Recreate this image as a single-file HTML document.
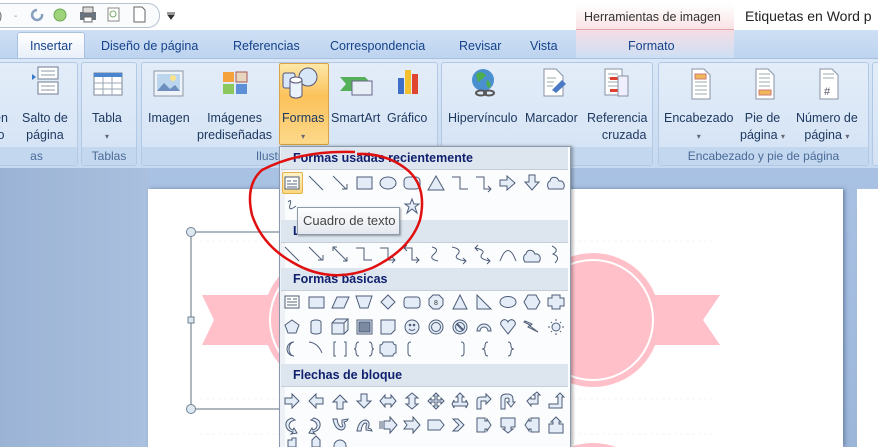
<!DOCTYPE html>
<html><head><meta charset="utf-8"><style>
*{margin:0;padding:0;box-sizing:border-box}
html,body{width:878px;height:447px;overflow:hidden}
body{position:relative;background:#fff;font-family:"Liberation Sans",sans-serif;font-size:12px;color:#1e3960}
.a{position:absolute;white-space:nowrap}
.tab{position:absolute;top:39px;font-size:12.5px;color:#15428b}
.grp{position:absolute;top:62px;height:104px;background:linear-gradient(#e3edf9,#d3e2f4);border:1px solid #b2c9e6;border-radius:3px}
.gl{position:absolute;bottom:0;left:0;right:0;height:18px;background:#c3d7ef;color:#4a6a98;text-align:center;font-size:12px;line-height:18px}
.lb{position:absolute;font-size:12.5px;color:#1e3960;text-align:center;line-height:17px}
.hd{position:absolute;left:281px;width:287px;background:#dde6ef;border-bottom:1px solid #c5ced8;font-weight:bold;color:#10206e;font-size:12.5px;padding-left:12px}
</style></head><body>
<div class="a" style="left:-20px;top:3px;width:180px;height:25px;border:1px solid #b9c3cf;border-radius:12px;background:#fafbfd"></div>
<svg class="a" style="left:0;top:0" width="180" height="30">
<text x="-2" y="20" font-size="13" fill="#777">)</text>
<text x="14" y="19" font-size="10" fill="#999">-</text>
<path d="M37 10 A5 5 0 1 0 42 14" stroke="#8aa0c0" stroke-width="2.5" fill="none"/>
<circle cx="60" cy="15" r="6" fill="#9ed37a" stroke="#6aa84f"/>
<rect x="80" y="12" width="16" height="8" fill="#6a7480"/><rect x="83" y="7" width="10" height="6" fill="#ddd" stroke="#666"/><rect x="84" y="17" width="8" height="5" fill="#fff" stroke="#666"/>
<rect x="108" y="8" width="11" height="13" fill="#fff" stroke="#888"/><circle cx="113" cy="14" r="3" fill="none" stroke="#7a6"/>
<path d="M134 7 H142 L145 10 V22 H134Z" fill="#fff" stroke="#666"/>
<path d="M167 13 H175 M168 15 L171 19 L174 15Z" stroke="#333" fill="#333"/>
</svg>
<div class="a" style="left:576px;top:4px;width:158px;height:27px;background:linear-gradient(#fff,#f9e3e6);border-bottom:2px solid #e7a4ac"></div>
<div class="a" style="left:584px;top:10px;font-size:12.5px;color:#333">Herramientas de imagen</div>
<div class="a" style="left:745px;top:8px;font-size:14px;color:#222">Etiquetas en Word p</div>
<div class="a" style="left:0;top:30px;width:878px;height:30px;background:linear-gradient(#cfe0f5,#bcd2ee)"></div>
<div class="a" style="left:576px;top:30px;width:158px;height:28px;background:linear-gradient(#f5dde4,#cddff4)"></div>
<div class="a" style="left:17px;top:32px;width:68px;height:28px;background:linear-gradient(#fff,#e6eef9);border:1px solid #a9c1e0;border-bottom:none;border-radius:3px 3px 0 0"></div>
<div class="tab" style="left:30px">Insertar</div>
<div class="tab" style="left:101px">Diseño de página</div>
<div class="tab" style="left:233px">Referencias</div>
<div class="tab" style="left:330px">Correspondencia</div>
<div class="tab" style="left:459px">Revisar</div>
<div class="tab" style="left:530px">Vista</div>
<div class="tab" style="left:628px">Formato</div>
<div class="a" style="left:0;top:58px;width:878px;height:112px;background:linear-gradient(#dae7f6,#c6d9f0);border-top:1px solid #a9c1e0"></div>
<div class="grp" style="left:-5px;width:83px"><div class="gl">as</div></div>
<div class="grp" style="left:81px;width:56px"><div class="gl">Tablas</div></div>
<div class="grp" style="left:141px;width:297px"><div class="gl">Ilustraciones</div></div>
<div class="grp" style="left:441px;width:212px"><div class="gl">Vínculos</div></div>
<div class="grp" style="left:658px;width:211px"><div class="gl">Encabezado y pie de página</div></div>
<div class="grp" style="left:872px;width:20px"></div>
<div class="a" style="left:279px;top:63px;width:50px;height:82px;background:linear-gradient(#fde8a8,#fbc25a 40%,#fdd98a);border:1px solid #d9a441;border-radius:2px"></div>
<svg class="a" style="left:0;top:60px" width="878" height="50">
<path d="M32 14 L36 17 L32 20Z" fill="#3a79c8"/><rect x="38" y="7" width="20" height="12" fill="#fff" stroke="#6d7c92"/><rect x="38" y="22" width="20" height="12" fill="#fff" stroke="#6d7c92"/>
<path d="M41 11H55M41 15H55M41 26H55M41 30H55" stroke="#8b99ad"/>
<rect x="94" y="13" width="28" height="22" fill="#fff" stroke="#7b8799"/><rect x="94" y="13" width="28" height="4" fill="#4b84cf"/><path d="M94 23H122M94 29H122M103 17V35M112 17V35" stroke="#9aa6b6"/>
<rect x="154" y="11" width="29" height="25" fill="#eef3fa" stroke="#8d97a6"/><rect x="157" y="14" width="23" height="17" fill="#bcd6ee"/><circle cx="173" cy="18" r="3" fill="#fde38a"/><path d="M157 31 L164 23 L170 29 L175 25 L180 31Z" fill="#6e8ec0"/>
<rect x="223" y="12" width="11" height="10" fill="#f4a33c"/><rect x="236" y="12" width="11" height="10" fill="#e8d7c0" stroke="#a55"/><rect x="223" y="24" width="11" height="10" fill="#8cc75d"/><rect x="236" y="24" width="11" height="10" fill="#5c8fd6"/>
<rect x="283" y="13" width="12" height="15" rx="2" fill="#d6e7fb" stroke="#557"/><circle cx="308" cy="17" r="9" fill="#d8e7f8" stroke="#557"/><path d="M290 20 V35 A6 3 0 0 0 302 35 V20Z" fill="#eaf2fc" stroke="#557"/><ellipse cx="296" cy="20" rx="6" ry="3" fill="#fff" stroke="#557"/>
<path d="M340 17 H365 L372 24 L365 31 H340 L346 24Z" fill="#55b05a"/><rect x="352" y="21" width="20" height="14" fill="#e8eef6" stroke="#668"/>
<rect x="398" y="18" width="6" height="16" fill="#3d6fc8"/><rect x="405" y="10" width="6" height="24" fill="#f3c12e"/><rect x="412" y="14" width="6" height="20" fill="#e0452f"/>
<circle cx="483" cy="20" r="11" fill="#4a90d0"/><path d="M476 14 Q481 10 486 15 Q482 20 478 22Z M487 20 Q492 22 490 28 Q485 27 487 20Z" fill="#4cae4c"/><ellipse cx="481" cy="33" rx="5" ry="2.5" fill="none" stroke="#555" stroke-width="2"/><ellipse cx="489" cy="33" rx="5" ry="2.5" fill="none" stroke="#555" stroke-width="2"/>
<path d="M544 9 H556 L563 16 V36 H544Z" fill="#fff" stroke="#8893a3"/><path d="M547 18H556M547 22H554M547 26H553" stroke="#9aa"/><path d="M552 30 L562 20 L566 24 L556 33Z" fill="#4c79c4"/>
<rect x="605" y="9" width="17" height="26" fill="#fff" stroke="#8893a3"/><path d="M608 14H618M608 18H614M608 22H618M608 26H618" stroke="#9aa"/><rect x="610" y="17" width="8" height="3" fill="#e04030"/><rect x="610" y="29" width="8" height="3" fill="#e04030"/><rect x="618" y="16" width="10" height="20" fill="#eef" stroke="#8893a3"/>
<path d="M692 9 H704 L710 15 V39 H692Z" fill="#fff" stroke="#8893a3"/><rect x="695" y="14" width="11" height="5" fill="#f2b857" stroke="#c77"/><path d="M695 22H707M695 26H707M695 30H707M695 34H707" stroke="#9aa"/>
<path d="M756 9 H768 L774 15 V39 H756Z" fill="#fff" stroke="#8893a3"/><path d="M759 14H770M759 18H770M759 22H770M759 26H770" stroke="#9aa"/><rect x="759" y="30" width="12" height="5" fill="#f2b857" stroke="#c77"/>
<path d="M820 9 H832 L838 15 V39 H820Z" fill="#fff" stroke="#8893a3"/><path d="M823 14H834M823 18H834" stroke="#9aa"/><text x="824" y="35" font-size="11" fill="#556">#</text>
</svg>
<div class="lb" style="left:-6px;top:110px">en<br>o</div>
<div class="lb" style="left:22px;top:110px">Salto de<br>página</div>
<div class="lb" style="left:92px;top:110px">Tabla<br><span style="font-size:8px;color:#667">▾</span></div>
<div class="lb" style="left:148px;top:110px">Imagen</div>
<div class="lb" style="left:197px;top:110px">Imágenes<br>prediseñadas</div>
<div class="lb" style="left:282px;top:110px">Formas<br><span style="font-size:8px;color:#667">▾</span></div>
<div class="lb" style="left:331px;top:110px">SmartArt</div>
<div class="lb" style="left:387px;top:110px">Gráfico</div>
<div class="lb" style="left:448px;top:110px">Hipervínculo</div>
<div class="lb" style="left:525px;top:110px">Marcador</div>
<div class="lb" style="left:587px;top:110px">Referencia<br>&nbsp;&nbsp;&nbsp;&nbsp;cruzada</div>
<div class="lb" style="left:664px;top:110px">Encabezado<br><span style="font-size:8px;color:#667">▾</span></div>
<div class="lb" style="left:740px;top:110px">Pie de<br>página <span style="font-size:8px;color:#667">▾</span></div>
<div class="lb" style="left:796px;top:110px">Número de<br>página <span style="font-size:8px;color:#667">▾</span></div>
<div class="a" style="left:0;top:168px;width:878px;height:279px;background:linear-gradient(#a9c2e4,#9cb6da)"></div>
<div class="a" style="left:0;top:168px;width:148px;height:279px;background:linear-gradient(90deg,#9bb3d5,#aac0de)"></div>
<div class="a" style="left:148px;top:189px;width:695px;height:258px;background:#fff;box-shadow:2px 0 4px #6d84a8"></div>
<div class="a" style="left:857px;top:189px;width:21px;height:258px;background:#fff"></div>
<svg class="a" style="left:0;top:0" width="878" height="447">
<path d="M202 295 H720 L703 320 L720 345 H202 L214 320Z" fill="#ffc0c9"/>
<circle cx="330" cy="320" r="67" fill="#ffc0c9"/><circle cx="330" cy="320" r="60" fill="none" stroke="#fff" stroke-width="2"/>
<circle cx="593" cy="320" r="67" fill="#ffc0c9"/><circle cx="593" cy="320" r="60" fill="none" stroke="#fff" stroke-width="2"/>
<circle cx="593" cy="510" r="67" fill="#ffc0c9"/>
<path d="M200 241 H715 M200 399 H715 M200 434 H715" stroke="#f6f6f8" stroke-dasharray="3 3"/>
<rect x="191" y="232" width="100" height="177" fill="none" stroke="#5c6d7e"/>
<circle cx="191" cy="232" r="4.5" fill="#dde8f0" stroke="#6f8296"/><circle cx="191" cy="409" r="4.5" fill="#dde8f0" stroke="#6f8296"/><rect x="188" y="317" width="6" height="6" fill="#dde8f0" stroke="#6f8296"/>
</svg>
<div class="a" style="left:279px;top:146px;width:292px;height:301px;background:#fbfcfd;border:1px solid #8a99ab;border-bottom:none;box-shadow:2px 0 3px rgba(0,0,0,.3)"></div>
<div class="a" style="left:280px;top:147px;width:5px;height:300px;background:#eef1f5"></div>
<div class="hd" style="top:147px;height:23px;line-height:23px">Formas usadas recientemente</div>
<div class="hd" style="top:220px;height:23px;line-height:23px">Líneas</div>
<div class="hd" style="top:268px;height:23px;line-height:23px">Formas básicas</div>
<div class="hd" style="top:364px;height:23px;line-height:23px">Flechas de bloque</div>
<div class="a" style="left:282px;top:172px;width:21px;height:22px;background:linear-gradient(#fff4c9,#fcd77c);border:1px solid #e3b24c;border-radius:2px"></div>
<svg class="a" style="left:0;top:0" width="878" height="447" fill="#e3ecf7" stroke="#4d5d78" stroke-width="1">
<rect x="285" y="177" width="14" height="12" fill="#fff"/><path d="M287 181H291M293 181H297M287 184H297M287 187H297" stroke="#567"/>
<path d="M309 176 L323 190" fill="none"/><path d="M333 176 L346 189 M342 189H347V184" fill="none"/>
<rect x="357" y="177" width="15" height="12"/><ellipse cx="388" cy="183" rx="8" ry="6"/><rect x="404" y="177" width="16" height="12" rx="4"/>
<path d="M436 176 L444 190 H428Z"/><path d="M452 177 H460 V189 H468" fill="none"/><path d="M476 177 H484 V189 H491 M488 186 L491 189 L488 192" fill="none"/>
<path d="M500 180 H507 V176 L515 183 L507 190 V186 H500Z"/><path d="M529 175 H535 V182 H539 L532 190 L525 182 H529Z"/>
<path d="M549 189 H563 C566 185 563 180 559 181 C557 176 551 176 550 181 C547 182 547 187 549 189Z"/>
<path d="M288 202 Q292 198 290 205 Q288 212 296 206" fill="none"/>
<path d="M412 199 L414 204 L419 204 L415 207 L417 213 L412 209 L407 213 L409 207 L405 204 L410 204Z"/>
<g fill="none">
<path d="M285 247 L299 261"/><path d="M309 247 L322 260 M318 260H323V255"/><path d="M333 247 L347 261 M333 251V247H337 M343 261H347V257"/>
<path d="M356 248 H364 V260 H372"/><path d="M380 248 H388 V260 H395 M392 257 L395 260 L392 263"/><path d="M407 245 L404 248 L407 251 M404 248 H412 V260 H419 M416 257 L419 260 L416 263"/>
<path d="M432 247 Q440 249 434 254 Q428 259 438 261"/><path d="M452 247 Q462 249 458 254 Q452 259 466 261 M463 258 L466 261 L463 264"/><path d="M478 245 L475 248 L478 251 M475 248 Q486 250 482 254 Q478 259 490 261 M487 258 L490 261 L487 264"/>
<path d="M500 261 Q508 240 516 261"/>
</g>
<path d="M525 262 H539 C542 258 539 253 535 254 C533 249 527 249 526 254 C523 255 523 260 525 262Z"/>
<path d="M552 246 Q560 250 553 254 Q561 257 555 263" fill="none"/>
<rect x="285" y="296" width="14" height="12" fill="#fff"/><path d="M287 299H291M293 299H297M287 302H297M287 305H297" stroke="#567"/>
<rect x="309" y="297" width="15" height="11"/><path d="M337 297 H349 L344 308 H332Z"/><path d="M356 296 H372 L368 308 H360Z"/>
<path d="M388 295 L395 302 L388 309 L381 302Z"/><rect x="404" y="297" width="16" height="11" rx="3"/>
<path d="M433 295 H439 L443 299 V305 L439 309 H433 L429 305 V299Z"/><text x="434" y="305" font-size="7" fill="#333" stroke="none">8</text>
<path d="M460 295 L467 309 H453Z"/><path d="M477 295 L491 309 H477Z"/><ellipse cx="508" cy="302" rx="8" ry="5.5"/>
<path d="M528 295 H536 L540 302 L536 309 H528 L524 302Z"/><path d="M552 295 H560 V298 H564 V306 H560 V309 H552 V306 H548 V298 H552Z"/>
<path d="M292 320 L299 325 L296 333 H288 L285 325Z"/><path d="M311 322 V332 A5 2 0 0 0 321 332 V322 A5 2 0 0 0 311 322Z"/><path d="M332 323 H344 V334 H332Z M332 323 L336 319 H348 L344 323 M344 334 L348 330 V319" />
<rect x="357" y="320" width="15" height="14"/><rect x="359" y="322" width="11" height="10" fill="#7b8aa0"/>
<path d="M381 320 H395 V330 L391 334 H381Z"/><circle cx="412" cy="327" r="7"/><circle cx="410" cy="325" r=".8" fill="#333"/><circle cx="414" cy="325" r=".8" fill="#333"/><path d="M409 329 Q412 332 415 329" fill="none"/>
<circle cx="436" cy="327" r="7"/><circle cx="436" cy="327" r="4.5"/><circle cx="460" cy="327" r="7"/><circle cx="460" cy="327" r="4.5"/><path d="M457 324 L463 330" stroke-width="2"/>
<path d="M477 331 A7 7 0 0 1 491 331 H488 A4 4 0 0 0 480 331Z"/><path d="M508 334 L501 325 A3.5 3.5 0 0 1 508 322 A3.5 3.5 0 0 1 515 325Z"/>
<path d="M525 321 L532 324 L530 326 L538 332 L528 327 L530 325 L524 322Z"/><circle cx="556" cy="327" r="4"/><path d="M556 319V321M556 333V335M548 327H550M562 327H564M551 322L552 323M560 331L561 332M561 322L560 323M551 332L552 331" />
<path d="M294 342 A7 7 0 1 0 294 356 A5 7 0 1 1 294 342Z"/><path d="M309 342 Q318 343 322 353" fill="none"/>
<path d="M336 342 H334 V356 H336 M344 342 H346 V356 H344" fill="none"/><path d="M359 342 Q356 342 356 346 Q356 349 354 349 Q356 349 356 352 Q356 356 359 356 M369 342 Q372 342 372 346 Q372 349 374 349 Q372 349 372 352 Q372 356 369 356" fill="none"/>
<path d="M383 342 H393 A3 3 0 0 0 396 345 V353 A3 3 0 0 0 393 356 H383 A3 3 0 0 0 380 353 V345 A3 3 0 0 0 383 342Z"/>
<path d="M411 342 Q408 342 408 345 V353 Q408 356 411 356" fill="none"/><path d="M461 342 Q464 342 464 345 V353 Q464 356 461 356" fill="none"/>
<path d="M488 342 Q485 342 485 346 Q485 349 482 349 Q485 349 485 352 Q485 356 488 356" fill="none"/><path d="M508 342 Q511 342 511 346 Q511 349 514 349 Q511 349 511 352 Q511 356 508 356" fill="none"/>
<path d="M285 398 H292 V394 L299 401 L292 408 V404 H285Z"/><path d="M323 398 H316 V394 L309 401 L316 408 V404 H323Z"/>
<path d="M337 409 V402 H333 L340 395 L347 402 H343 V409Z"/><path d="M361 394 V401 H357 L364 408 L371 401 H367 V394Z"/>
<path d="M380 401 L385 395 V398 H391 V395 L396 401 L391 407 V404 H385 V407Z"/><path d="M412 393 L418 398 H415 V404 H418 L412 409 L406 404 H409 V398 H406Z"/>
<path d="M436 393 L439 396 H437 V400 H441 V398 L444 401 L441 404 V402 H437 V406 H439 L436 409 L433 406 H435 V402 H431 V404 L428 401 L431 398 V400 H435 V396 H433Z"/>
<path d="M460 393 L464 397 H462 V402 H466 V400 L468 404 L466 408 V406 H454 V408 L452 404 L454 400 V402 H458 V397 H456Z"/>
<path d="M477 409 V400 Q477 397 481 397 H486 V394 L491 399 L486 404 V401 H481 V409Z"/><path d="M501 409 V398 Q501 394 507 394 Q513 394 513 399 V402 H515 L511 407 L507 402 H509 V399 Q509 398 507 398 Q505 398 505 400 V409Z"/>
<path d="M527 401 L531 397 V399 H535 V395 H533 L537 392 L540 395 H538 V404 H531 V406Z"/><path d="M549 404 H558 V397 H556 L560 393 L564 397 H562 V408 H549Z"/>
<path d="M292 418 Q285 420 286 426 Q287 431 293 432 L291 434 L297 433 L294 428 L293 430 Q289 429 289 425 Q290 421 295 420Z"/>
<path d="M314 418 Q321 420 320 426 Q319 431 313 432 L315 434 L309 433 L312 428 L313 430 Q317 429 317 425 Q316 421 311 420Z"/>
<path d="M333 419 Q335 430 342 430 Q347 428 344 422 L347 421 L348 419 L342 420 L342 424 Q344 427 341 427 Q338 426 337 419Z"/>
<path d="M357 431 Q359 420 366 420 Q371 422 368 428 L371 429 L372 431 L366 430 L366 426 Q368 423 365 423 Q362 424 361 431Z"/>
<path d="M380 421V429M382 421V429M384 421 H390 V417 L397 425 L390 433 V429 H384Z"/>
<path d="M404 421 H413 V417 L420 425 L413 433 V429 H404 L407 425Z"/><path d="M428 420 H440 L444 425 L440 430 H428Z"/>
<path d="M453 419 H458 L464 425 L458 431 H453 L459 425Z"/><path d="M477 418 H485 V421 H487 V419 L491 425 L487 431 V429 H485 V432 H477Z"/>
<path d="M501 418 H515 V427 H511 V429 H513 L508 433 L503 429 H505 V427 H501Z"/><path d="M531 418 H539 V432 H531 V429 H529 V431 L525 425 L529 419 V421 H531Z"/>
<path d="M549 424 H553 V422 H551 L556 417 L561 422 H559 V424 H563 V433 H549Z"/>
<path d="M288 440 H292 V438 H296 V447 H288Z"/><path d="M312 440 L316 436 L320 440 V447 H312Z"/><circle cx="340" cy="446" r="6"/>
</svg>
<div class="a" style="left:297px;top:207px;width:103px;height:28px;background:linear-gradient(#fff,#e4e8ee);border:1px solid #8f9aa8;box-shadow:1px 1px 2px rgba(0,0,0,.35);font-size:13px;color:#444;line-height:26px;padding-left:5px">Cuadro de texto</div>
<svg class="a" style="left:0;top:0" width="878" height="447">
<path d="M355 152 Q300 150 262 170 Q245 185 252 215 Q262 245 292 262 Q330 285 372 268 Q410 250 420 220 Q428 185 405 168 Q385 153 357 154" fill="none" stroke="#e01010" stroke-width="2.5"/>
</svg>
</body></html>
